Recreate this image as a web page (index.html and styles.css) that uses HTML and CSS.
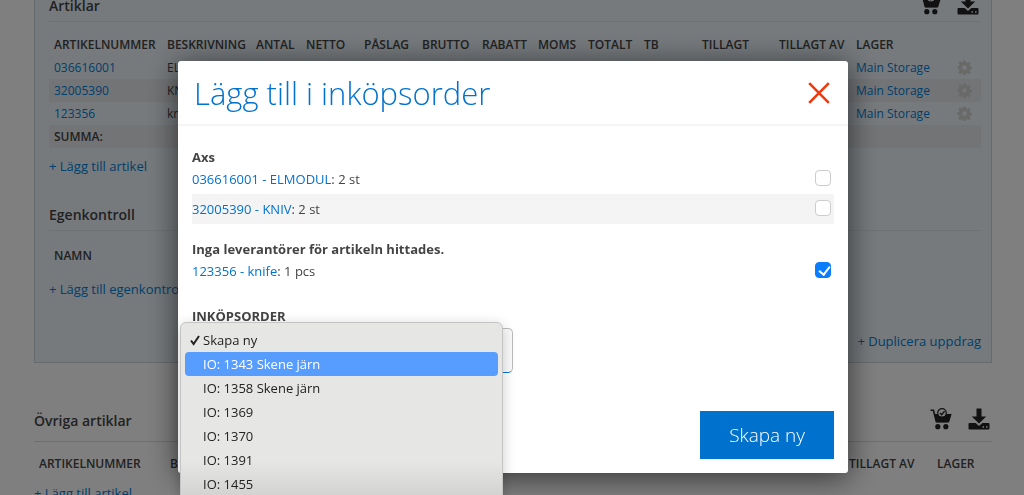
FILE: index.html
```html
<!DOCTYPE html>
<html lang="sv">
<head>
  <meta charset="UTF-8" />
  <title>Lägg till i inköpsorder</title>
  <meta name="viewport" content="width=device-width, initial-scale=1" />
  <link rel="stylesheet" href="styles.css">
</head>
<body>
  <svg class="sprite" aria-hidden="true">
    <symbol id="icon-cart" viewBox="0 0 22 22">
      <path d="M0.500 2.300H3.400L6.300 13.500H18.500L20.800 6" fill="none" stroke="currentColor" stroke-width="1.600"/>
      <path d="M4 6H7.500A5 5 0 0 0 16.500 6H21.300L18.300 14.500H6.300Z" fill="currentColor"/>
      <circle cx="12" cy="5" r="4.300" fill="none" stroke="currentColor" stroke-width="1.200"/>
      <path d="M10 5l1.600 1.700L14.600 3.300" fill="none" stroke="currentColor" stroke-width="1.400"/>
      <circle cx="7.800" cy="18.700" r="2.600" fill="currentColor"/>
      <circle cx="15.800" cy="18.700" r="2.600" fill="currentColor"/>
    </symbol>
    <symbol id="icon-download" viewBox="0 0 22 22">
      <path d="M8.500 0.500h5v8h4.700L11 15.500 3.800 8.500h4.700Z" fill="currentColor"/>
      <path fill-rule="evenodd" d="M1.500 15H7.600L11 18l3.400-3h6.100q1 0 1 1v4.500q0 1-1 1h-19q-1 0-1-1V16q0-1 1-1ZM14.500 18.300v1.400H16v-1.400ZM18 18.300v1.400h1.500v-1.400Z" fill="currentColor"/>
    </symbol>
    <symbol id="icon-gear" viewBox="0 0 16 16">
      <path fill-rule="evenodd" d="M6.700 0.500h2.600l.4 2.100 1.200.5 1.800-1.200 1.900 1.900-1.200 1.800.5 1.200 2.100.4v2.600l-2.100.4-.5 1.200 1.200 1.800-1.900 1.900-1.800-1.200-1.200.5-.4 2.100H6.700l-.4-2.100-1.200-.5-1.800 1.200-1.900-1.900 1.200-1.800-.5-1.200L.5 9.300V6.700l1.600-.4.500-1.200-1.200-1.800 1.900-1.900 1.800 1.200 1.200-.5ZM8 5.500a2.500 2.500 0 1 0 0 5 2.500 2.500 0 0 0 0-5Z" fill="currentColor"/>
    </symbol>
  </svg>

  <main class="page">
    <section class="panel">
      <div class="section-head">
        <h2>Artiklar</h2>
        <div class="tools">
          <button type="button" aria-label="Inköpsorder"><svg><use href="#icon-cart"/></svg></button>
          <button type="button" aria-label="Ladda ner"><svg><use href="#icon-download"/></svg></button>
        </div>
      </div>
      <table class="articles">
        <thead>
          <tr>
            <th class="w-nr">Artikelnummer</th>
            <th class="w-desc">Beskrivning</th>
            <th class="w-50">Antal</th>
            <th class="w-58">Netto</th>
            <th class="w-58">Påslag</th>
            <th class="w-60">Brutto</th>
            <th class="w-56">Rabatt</th>
            <th class="w-50">Moms</th>
            <th class="w-56">Totalt</th>
            <th class="w-58">TB</th>
            <th class="w-77">Tillagt</th>
            <th class="w-77">Tillagt av</th>
            <th>Lager</th>
            <th class="w-gear"></th>
          </tr>
        </thead>
        <tbody>
          <tr>
            <td><a href="#">036616001</a></td>
            <td colspan="11">ELMODUL</td>
            <td><a href="#">Main Storage</a></td>
            <td><button type="button" class="gear" aria-label="Inställningar"><svg><use href="#icon-gear"/></svg></button></td>
          </tr>
          <tr>
            <td><a href="#">32005390</a></td>
            <td colspan="11">KNIV</td>
            <td><a href="#">Main Storage</a></td>
            <td><button type="button" class="gear" aria-label="Inställningar"><svg><use href="#icon-gear"/></svg></button></td>
          </tr>
          <tr>
            <td><a href="#">123356</a></td>
            <td colspan="11">knife</td>
            <td><a href="#">Main Storage</a></td>
            <td><button type="button" class="gear" aria-label="Inställningar"><svg><use href="#icon-gear"/></svg></button></td>
          </tr>
          <tr>
            <th colspan="14">Summa:</th>
          </tr>
        </tbody>
      </table>
      <a class="add" href="#">+ Lägg till artikel</a>

      <div class="section-head control-head">
        <h2>Egenkontroll</h2>
      </div>
      <table class="articles">
        <thead>
          <tr><th>Namn</th></tr>
        </thead>
      </table>
      <a class="add" href="#">+ Lägg till egenkontroll</a>
      <a class="add duplicate" href="#">+ Duplicera uppdrag</a>
    </section>

    <section class="other">
      <div class="section-head">
        <h2>Övriga artiklar</h2>
        <div class="tools">
          <button type="button" aria-label="Inköpsorder"><svg><use href="#icon-cart"/></svg></button>
          <button type="button" aria-label="Ladda ner"><svg><use href="#icon-download"/></svg></button>
        </div>
      </div>
      <table class="articles">
        <thead>
          <tr>
            <th class="w-other">Artikelnummer</th>
            <th>Beskrivning</th>
            <th class="w-88">Tillagt av</th>
            <th class="w-60">Lager</th>
          </tr>
        </thead>
      </table>
      <a class="add" href="#">+ Lägg till artikel</a>
    </section>
  </main>

  <div class="overlay">
    <form class="modal" role="dialog" aria-labelledby="modal-title">
      <header class="modal-head">
        <h1 id="modal-title">Lägg till i inköpsorder</h1>
        <button type="button" class="close" aria-label="Stäng">
          <svg viewBox="0 0 22 22"><path d="M2 2L20 20M20 2L2 20"/></svg>
        </button>
      </header>
      <div class="modal-body">
        <h3>Axs</h3>
        <div class="line">
          <label for="item1"><a href="#">036616001 - ELMODUL</a>: 2 st</label>
          <input type="checkbox" id="item1">
        </div>
        <div class="line striped">
          <label for="item2"><a href="#">32005390 - KNIV</a>: 2 st</label>
          <input type="checkbox" id="item2">
        </div>
        <h3 class="group">Inga leverantörer för artikeln hittades.</h3>
        <div class="line">
          <label for="item3"><a href="#">123356 - knife</a>: 1 pcs</label>
          <input type="checkbox" id="item3" checked>
        </div>
        <label class="field-label" for="order">INKÖPSORDER</label>
        <div class="field">
          <select id="order">
            <option>Skapa ny</option>
          </select>
          <ul class="menu" role="listbox" aria-label="Inköpsorder">
            <li role="option" aria-selected="true"><svg viewBox="0 0 12 12"><path d="M2 6.500L4.600 10 10 2"/></svg>Skapa ny</li>
            <li role="option" class="active">IO: 1343 Skene järn</li>
            <li role="option">IO: 1358 Skene järn</li>
            <li role="option">IO: 1369</li>
            <li role="option">IO: 1370</li>
            <li role="option">IO: 1391</li>
            <li role="option">IO: 1455</li>
          </ul>
        </div>
        <footer>
          <button type="submit" class="primary">Skapa ny</button>
        </footer>
      </div>
    </form>
  </div>
</body>
</html>
```

FILE: styles.css
```css
* {
  box-sizing: border-box;
}
body {
  margin: 0;
  height: 100vh;
  overflow: hidden;
  background: white;
  color: #444;
  font-family: "Open Sans", sans-serif;
  font-size: 13px;
  line-height: 20px;
}
h1, h2, h3 {
  margin: 0;
}
a {
  color: #0072ce;
  text-decoration: none;
}
button {
  border: none;
  padding: 0;
  background: none;
  font-family: inherit;
  cursor: pointer;
}
.sprite {
  display: none;
}

/* Sidan bakom dialogen, lite nedscrollad */
.page {
  margin: -20px 32px 0 34px;
}
.page a {
  color: #0080d8;
}
.panel {
  padding: 0 10px 11px 14px;
  background: #ecf4fa;
  border: 1px solid #cfd4d8;
  border-top: none;
}
.section-head {
  display: flex;
  justify-content: space-between;
  align-items: flex-end;
  height: 42px;
  padding-bottom: 5px;
  border-bottom: 1px solid #dfe5ea;
}
.section-head h2 {
  font-size: 14px;
  font-weight: 600;
}
.control-head {
  margin-top: 13px;
}
.tools {
  display: flex;
  gap: 16px;
  padding: 0 2px 1px 0;
}
.tools button {
  color: #222;
  height: 22px;
}
.tools svg {
  display: block;
  width: 22px;
  height: 22px;
}

.articles {
  width: 100%;
  margin-top: 11px;
  border-collapse: collapse;
  table-layout: fixed;
  font-size: 12px;
}
.articles th, .articles td {
  height: 23px;
  padding: 0 5px;
  text-align: left;
  white-space: nowrap;
}
.articles th {
  font-weight: 600;
  text-transform: uppercase;
}
.articles tbody tr:nth-child(even) {
  background: #e6e8ec;
}
.w-nr { width: 113px; }
.w-desc { width: 89px; }
.w-50 { width: 50px; }
.w-56 { width: 56px; }
.w-58 { width: 58px; }
.w-60 { width: 60px; }
.w-77 { width: 77px; }
.w-88 { width: 88px; }
.w-gear { width: 34px; }
.w-other { width: 131px; }
.gear {
  display: block;
  margin-left: 5px;
  color: #d2d2d0;
}
.gear svg {
  display: block;
  width: 15px;
  height: 15px;
}
.add {
  display: block;
  margin-top: 8px;
}
.control-head + .articles {
  margin-top: 13px;
}
.control-head + .articles + .add {
  margin-top: 12px;
}
.page .duplicate {
  margin-top: 32px;
  text-align: right;
}
.other {
  margin-top: 37px;
}
.other .section-head {
  padding-bottom: 10px;
  border-color: #ddd;
}
.other .articles {
  margin-top: 10px;
}

/* Dialog */
.overlay {
  position: fixed;
  inset: 0;
  display: flex;
  justify-content: center;
  align-items: flex-start;
  padding: 61px 20px 0 22px;
  background: rgba(0, 0, 0, 0.5);
}
.modal {
  width: 100%;
  max-width: 670px;
  background: white;
  border-radius: 3px;
  box-shadow: 0 4px 30px rgba(0, 0, 0, 0.6);
}
.modal-head {
  display: flex;
  justify-content: space-between;
  align-items: center;
  height: 65px;
  padding: 0 17px 0 16px;
  border-bottom: 2px solid #f5f5f5;
}
.modal-head h1 {
  font-size: 31px;
  font-weight: 300;
  line-height: 40px;
  color: #0072ce;
}
.close svg {
  display: block;
  width: 24px;
  height: 24px;
  fill: none;
  stroke: #f03a10;
  stroke-width: 2.400;
}
.modal-body {
  padding: 21px 14px 14px;
}
.modal-body h3 {
  font-size: 13px;
  font-weight: 700;
}
.modal-body .group {
  margin-top: 15px;
}
.line {
  display: flex;
  justify-content: space-between;
  align-items: center;
  height: 24px;
  padding-right: 3px;
}
.line.striped {
  height: 30px;
  margin-top: 3px;
  background: #f4f4f4;
}
.line input {
  appearance: none;
  width: 16px;
  height: 16px;
  margin: 0 0 2px;
  background: white;
  border: 1px solid #ccc;
  border-radius: 4px;
}
.line input:checked {
  border-color: #0a7cff;
  background: #0a7cff;
}
.line input:checked::before {
  content: "";
  display: block;
  width: 5px;
  height: 9px;
  margin: 1px 0 0 5px;
  border: solid white;
  border-width: 0 2px 2px 0;
  transform: rotate(38deg);
}
.field-label {
  display: block;
  margin-top: 23px;
  font-weight: 700;
}
.field {
  position: relative;
  width: 321px;
  margin-top: 2px;
}
.field select {
  display: block;
  width: 100%;
  height: 45px;
  padding: 0 12px;
  appearance: none;
  background: #fafafa;
  border: 1px solid #bbb;
  border-bottom-color: #0072ce;
  border-radius: 5px;
  color: #444;
  font: inherit;
}
.menu {
  position: absolute;
  top: -6px;
  left: -12px;
  z-index: 10;
  width: 323px;
  margin: 0;
  padding: 5px 4px;
  list-style: none;
  background: linear-gradient(#e6e6e4, #e6e6e4 138px, #d2d2d0 174px);
  border: 1px solid #c4c4c4;
  border-radius: 6px;
  box-shadow: 0 3px 14px rgba(0, 0, 0, 0.2);
  color: #222;
  line-height: 24px;
}
.menu li {
  padding-left: 18px;
  border-radius: 4px;
}
.menu li svg {
  float: left;
  width: 12px;
  height: 12px;
  margin: 6px 2px 0 -14px;
  fill: none;
  stroke: #222;
  stroke-width: 2;
}
.menu .active {
  background: #569dff;
  color: white;
}
.modal-body footer {
  display: flex;
  justify-content: flex-end;
  margin-top: 38px;
}
.primary {
  height: 48px;
  padding: 0 29px;
  background: #0072ce;
  color: white;
  font-size: 19px;
  font-weight: 300;
}
```
